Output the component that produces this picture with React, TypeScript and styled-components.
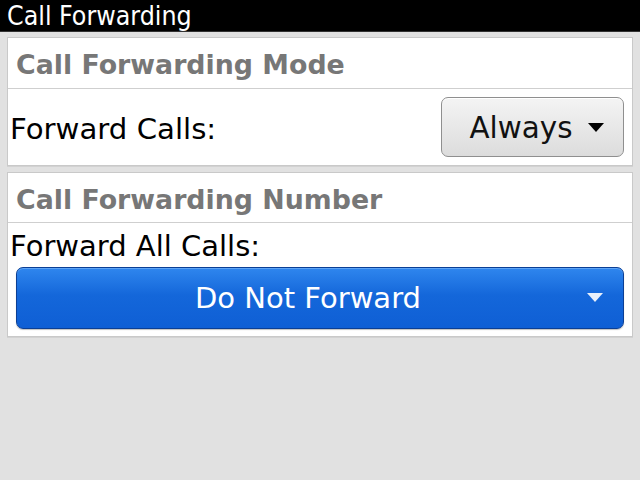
import React from "react";
import styled, { createGlobalStyle } from "styled-components";

const Global = createGlobalStyle`
  html, body { margin: 0; padding: 0; }
  body {
    width: 640px;
    height: 480px;
    overflow: hidden;
    background: #e1e1e1;
    font-family: "DejaVu Sans", "Liberation Sans", sans-serif;
  }
`;

const Screen = styled.div`
  width: 640px;
  height: 480px;
  display: flex;
  flex-direction: column;
  background: #e1e1e1;
`;

const TitleBar = styled.div`
  height: 32px;
  background: #000;
  color: #fff;
  font-family: "DejaVu Sans Condensed", "DejaVu Sans", sans-serif;
  font-stretch: semi-condensed;
  font-size: 26.5px;
  line-height: 31px;
  padding-left: 7px;
  box-sizing: border-box;
  border-bottom: 1px solid #333;
`;

const Body = styled.div`
  display: flex;
  flex-direction: column;
  gap: 6px;
  padding: 5px 7px 0 7px;
`;

const Panel = styled.section`
  background: #fff;
  border: 1px solid #c9c9c9;
  box-shadow: 0 1px 0 #d2d2d2;
  display: flex;
  flex-direction: column;
`;

const PanelHeader = styled.div<{ $h: number }>`
  height: ${(p) => p.$h}px;
  box-sizing: border-box;
  display: flex;
  align-items: center;
  padding: 3px 0 0 8px;
  font-weight: bold;
  font-size: 26.8px;
  color: #777;
  border-bottom: 1px solid #cfcfcf;
  white-space: nowrap;
`;

const Row = styled.div`
  height: 76px;
  box-sizing: border-box;
  display: flex;
  align-items: center;
  justify-content: space-between;
  padding: 0 8px 0 2px;
  font-size: 29.2px;
  color: #000;
`;

const RowLabel = styled.span`
  padding-top: 3px;
`;

const Label = styled.div`
  height: 44px;
  display: flex;
  align-items: center;
  padding: 2px 2px 0;
  box-sizing: border-box;
  font-size: 29px;
  color: #000;
`;

const Stack = styled.div`
  display: flex;
  flex-direction: column;
  padding: 0 8px 7px;
`;

const Caret = styled.span<{ $color: string }>`
  width: 0;
  height: 0;
  border-left: 8.5px solid transparent;
  border-right: 8.5px solid transparent;
  border-top: 9px solid ${(p) => p.$color};
`;

const ChoiceButton = styled.div`
  width: 183px;
  height: 60px;
  box-sizing: border-box;
  border: 1px solid #8f8f8f;
  border-radius: 7px;
  background: linear-gradient(#f4f4f4, #dcdcdc);
  box-shadow: inset 0 1px 0 #fff;
  display: flex;
  align-items: center;
  justify-content: center;
  gap: 15px;
  font-size: 29.4px;
  color: #111;
  padding-left: 8px;
`;

const ChoiceText = styled.span`
  padding-top: 2px;
`;

const BlueButton = styled.div`
  position: relative;
  height: 62px;
  box-sizing: border-box;
  border: 1px solid #0b3f95;
  border-radius: 7px;
  background: linear-gradient(#2f86ee, #1467da 45%, #0f5fd5);
  box-shadow: inset 0 1px 0 #5fa4f5, 0 1px 1px rgba(0, 0, 0, 0.25);
  display: flex;
  align-items: center;
  justify-content: center;
  font-size: 29px;
  color: #fff;
  padding-right: 24px;
`;

const BlueCaret = styled.span`
  position: absolute;
  right: 20px;
  top: 25px;
  width: 0;
  height: 0;
  border-left: 8.5px solid transparent;
  border-right: 8.5px solid transparent;
  border-top: 9px solid #e8f0fb;
`;

export default function App() {
  return (
    <Screen>
      <Global />
      <TitleBar>Call Forwarding</TitleBar>
      <Body>
        <Panel>
          <PanelHeader $h={51}>Call Forwarding Mode</PanelHeader>
          <Row>
            <RowLabel>Forward Calls:</RowLabel>
            <ChoiceButton>
              <ChoiceText>Always</ChoiceText>
              <Caret $color="#000" />
            </ChoiceButton>
          </Row>
        </Panel>
        <Panel>
          <PanelHeader $h={50}>Call Forwarding Number</PanelHeader>
          <Label>Forward All Calls:</Label>
          <Stack>
            <BlueButton>
              Do Not Forward
              <BlueCaret />
            </BlueButton>
          </Stack>
        </Panel>
      </Body>
    </Screen>
  );
}
